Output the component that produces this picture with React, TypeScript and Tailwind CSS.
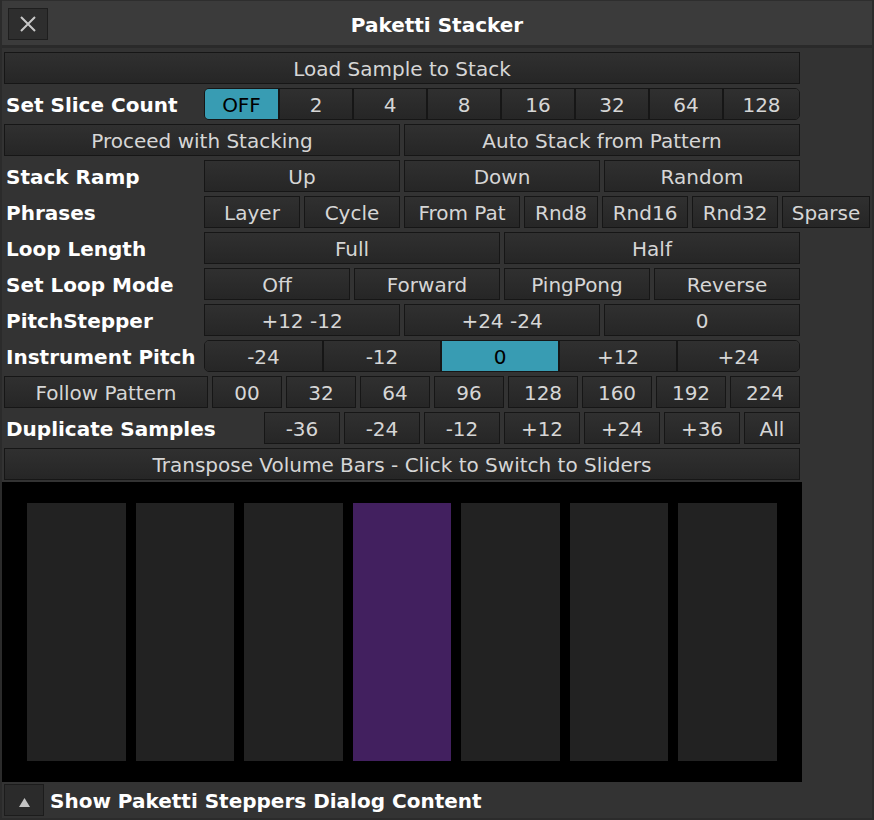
import type { ReactNode } from "react";
import clsx from "clsx";

type BtnProps = {
  children: ReactNode;
  className?: string;
  active?: boolean;
};

// plain square-cornered Renoise style button
function Btn({ children, className, active }: BtnProps) {
  return (
    <div
      className={clsx(
        "flex h-[32px] shrink-0 items-center justify-center whitespace-nowrap border border-[#161616] pt-[2px]",
        active
          ? "bg-[#389cb3] text-black"
          : "bg-linear-to-b from-[#303030] to-[#262626] text-[#d6d6d6]",
        className,
      )}
    >
      {children}
    </div>
  );
}

// segmented switch: rounded outer ends, square inner joins
function Segmented({
  items,
  widths,
  selected,
}: {
  items: string[];
  widths: string[];
  selected: number;
}) {
  return (
    <div className="flex h-[32px] shrink-0 overflow-hidden rounded-[5px] border border-[#161616]">
      {items.map((item, i) => (
        <div
          key={item}
          className={clsx(
            "flex h-full items-center justify-center pt-[2px]",
            widths[i],
            i > 0 && "border-l-2 border-[#161616]",
            i === selected
              ? "bg-[#389cb3] text-black"
              : "bg-linear-to-b from-[#303030] to-[#262626] text-[#d6d6d6]",
          )}
        >
          {item}
        </div>
      ))}
    </div>
  );
}

function Label({ children, className }: { children: ReactNode; className?: string }) {
  return (
    <div
      className={clsx(
        "flex h-[32px] shrink-0 items-center whitespace-nowrap pl-[2px] pt-[2px] font-bold text-white",
        className ?? "w-[196px]",
      )}
    >
      {children}
    </div>
  );
}

function Row({ children }: { children: ReactNode }) {
  return <div className="flex h-[32px] gap-[4px]">{children}</div>;
}

const bars = [false, false, false, true, false, false, false];

export default function App() {
  return (
    <div className="flex h-[820px] w-[874px] flex-col overflow-hidden border-x-2 border-b-2 border-[#2b2b2b] bg-[#333333] font-['DejaVu_Sans',sans-serif] text-[20px] leading-none">
      {/* title bar */}
      <div className="grid h-[45px] shrink-0 grid-cols-[1fr_auto_1fr] border-t border-[#2e2e2e] bg-[#3b3b3b]">
        <div className="pl-[6px] pt-[7px]">
          <div className="flex h-[32px] w-[40px] items-center justify-center border border-[#1e1e1e] bg-[#2e2e2e]">
            <svg width="18" height="18" viewBox="0 0 18 18">
              <path d="M2 2 L16 16 M16 2 L2 16" stroke="#c8c8c8" strokeWidth="2" />
            </svg>
          </div>
        </div>
        <div className="pt-[14px] font-bold text-white">Paketti Stacker</div>
        <div />
      </div>
      <div className="h-[3px] shrink-0 bg-[#2a2a2a]" />

      <div className="flex flex-col gap-[4px] pl-[2px] pt-[4px]">
        <Row>
          <Btn className="w-[796px]">Load Sample to Stack</Btn>
        </Row>
        <Row>
          <Label>Set Slice Count</Label>
          <Segmented
            items={["OFF", "2", "4", "8", "16", "32", "64", "128"]}
            widths={[
              "w-[73px]",
              "w-[74px]",
              "w-[74px]",
              "w-[74px]",
              "w-[74px]",
              "w-[74px]",
              "w-[74px]",
              "w-[77px]",
            ]}
            selected={0}
          />
        </Row>
        <Row>
          <Btn className="w-[396px]">Proceed with Stacking</Btn>
          <Btn className="w-[396px]">Auto Stack from Pattern</Btn>
        </Row>
        <Row>
          <Label>Stack Ramp</Label>
          <Btn className="w-[196px]">Up</Btn>
          <Btn className="w-[196px]">Down</Btn>
          <Btn className="w-[196px]">Random</Btn>
        </Row>
        <Row>
          <Label>Phrases</Label>
          <Btn className="w-[96px]">Layer</Btn>
          <Btn className="w-[96px]">Cycle</Btn>
          <Btn className="w-[116px]">From Pat</Btn>
          <Btn className="w-[74px]">Rnd8</Btn>
          <Btn className="w-[86px]">Rnd16</Btn>
          <Btn className="w-[86px]">Rnd32</Btn>
          <Btn className="w-[88px]">Sparse</Btn>
        </Row>
        <Row>
          <Label>Loop Length</Label>
          <Btn className="w-[296px]">Full</Btn>
          <Btn className="w-[296px]">Half</Btn>
        </Row>
        <Row>
          <Label>Set Loop Mode</Label>
          <Btn className="w-[146px]">Off</Btn>
          <Btn className="w-[146px]">Forward</Btn>
          <Btn className="w-[146px]">PingPong</Btn>
          <Btn className="w-[146px]">Reverse</Btn>
        </Row>
        <Row>
          <Label>PitchStepper</Label>
          <Btn className="w-[196px]">+12 -12</Btn>
          <Btn className="w-[196px]">+24 -24</Btn>
          <Btn className="w-[196px]">0</Btn>
        </Row>
        <Row>
          <Label>Instrument Pitch</Label>
          <Segmented
            items={["-24", "-12", "0", "+12", "+24"]}
            widths={["w-[117px]", "w-[118px]", "w-[118px]", "w-[118px]", "w-[123px]"]}
            selected={2}
          />
        </Row>
        <Row>
          <Btn className="w-[204px]">Follow Pattern</Btn>
          {["00", "32", "64", "96", "128", "160", "192", "224"].map((v) => (
            <Btn key={v} className="w-[70px]">
              {v}
            </Btn>
          ))}
        </Row>
        <Row>
          <Label className="w-[256px]">Duplicate Samples</Label>
          {["-36", "-24", "-12", "+12", "+24", "+36"].map((v) => (
            <Btn key={v} className="w-[76px]">
              {v}
            </Btn>
          ))}
          <Btn className="w-[56px]">All</Btn>
        </Row>
        <Row>
          <Btn className="w-[796px]">Transpose Volume Bars - Click to Switch to Sliders</Btn>
        </Row>
      </div>

      {/* volume bars canvas */}
      <div className="mt-[2px] flex h-[300px] w-[800px] shrink-0 gap-[10px] bg-black px-[25px] py-[21px]">
        {bars.map((on, i) => (
          <div key={i} className={clsx("flex-1", on ? "bg-[#42205f]" : "bg-[#222222]")} />
        ))}
      </div>

      {/* footer */}
      <div className="mt-[2px] flex h-[32px] items-center gap-[6px] pl-[2px]">
        <div className="flex h-[32px] w-[40px] items-end justify-center border border-[#1c1c1c] bg-[#2b2b2b] pb-[8px]">
          <svg width="11" height="9" viewBox="0 0 11 9">
            <path d="M5.5 0 L11 9 L0 9 Z" fill="#c4c4c4" />
          </svg>
        </div>
        <div className="pt-[2px] font-bold text-white">Show Paketti Steppers Dialog Content</div>
      </div>
    </div>
  );
}
